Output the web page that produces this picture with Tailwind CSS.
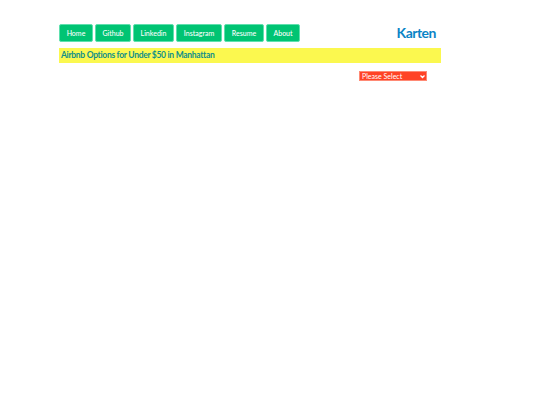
<!DOCTYPE html>
<html lang="en">
<head>
    <meta charset="UTF-8">
    <title>Karten</title>
    <script src="https://cdn.jsdelivr.net/npm/@tailwindcss/browser@4"></script>
</head>
<body class="bg-white font-['Lato',sans-serif] w-[540px] h-[405px] overflow-hidden">
    <div class="w-[382px] ml-[59px] pt-6">
        <header class="flex justify-between items-center h-[18px]">
            <nav class="flex gap-[2px] text-[7px] font-medium text-white">
                <a class="w-[34px] h-[18px] flex items-center justify-center bg-[#00c473] border border-[#5fe0ae] rounded-[2px]">Home</a>
                <a class="w-[36px] h-[18px] flex items-center justify-center bg-[#00c473] border border-[#5fe0ae] rounded-[2px]">Github</a>
                <a class="w-[41px] h-[18px] flex items-center justify-center bg-[#00c473] border border-[#5fe0ae] rounded-[2px]">Linkedin</a>
                <a class="w-[46px] h-[18px] flex items-center justify-center bg-[#00c473] border border-[#5fe0ae] rounded-[2px]">Instagram</a>
                <a class="w-[40px] h-[18px] flex items-center justify-center bg-[#00c473] border border-[#5fe0ae] rounded-[2px]">Resume</a>
                <a class="w-[34px] h-[18px] flex items-center justify-center bg-[#00c473] border border-[#5fe0ae] rounded-[2px]">About</a>
            </nav>
            <div class="mr-[5px] text-[14px] tracking-[-0.5px] font-bold leading-none text-[#0a84c6]">Karten</div>
        </header>
        <h1 class="mt-[6px] h-[15px] pl-[2px] flex items-center bg-[#fbf84f] text-[8.5px] tracking-[-0.3px] font-bold text-[#0f8f8a]">Airbnb Options for Under $50 in Manhattan</h1>
        <div class="mt-2 ml-[300px] w-[68px] h-[10px] pl-[2px] pr-[1px] flex items-center justify-between bg-[#ff4326] border border-[#ff8a75] text-[7px] text-white">
            <span>Please Select</span>
            <svg class="w-[5px] h-[5px]" viewBox="0 0 10 10" fill="none" stroke="white" stroke-width="2.5"><path d="M1 3l4 4 4-4"/></svg>
        </div>
    </div>
</body>
</html>
